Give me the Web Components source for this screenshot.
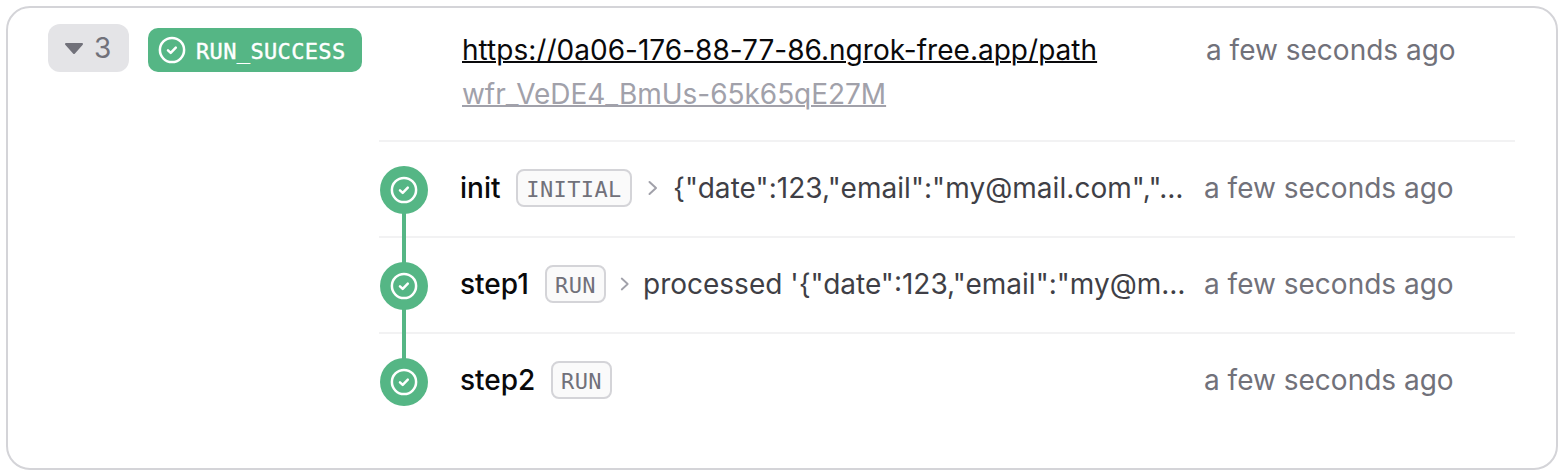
<!DOCTYPE html>
<html lang="en">
<head>
<meta charset="utf-8">
<title>Workflow run</title>
<style>
body{margin:0;padding:6px;background:#fff;font:28px/44px Inter,sans-serif;color:#09090b}
</style>
</head>
<body>
<run-card>
  <run-toggle slot="side">3</run-toggle>
  <run-status slot="side">RUN_SUCCESS</run-status>
  <run-header when="a few seconds ago"><span slot="url">https://0a06-176-88-77-86.ngrok-free.app/path</span><span slot="id">wfr_VeDE4_BmUs-65k65qE27M</span></run-header>
  <run-step name="init" type="INITIAL" when="a few seconds ago" linked style="--nw:40px;--bw:112px;--aw:13px;--gap:14px;--ls:.05px">{"date":123,"email":"my@mail.com","…</run-step>
  <run-step name="step1" type="RUN" when="a few seconds ago" linked style="--nw:69px;--bw:57px;--aw:11px;--gap:12px">processed '{"date":123,"email":"my@m…</run-step>
  <run-step name="step2" type="RUN" when="a few seconds ago" style="--nw:75px;--bw:57px"></run-step>
</run-card>
<script>
const define = (name, html, setup) => {
  const template = document.createElement('template');
  template.innerHTML = html;
  customElements.define(name, class extends HTMLElement {
    constructor() {
      super();
      this.attachShadow({ mode: 'open' }).append(template.content.cloneNode(true));
    }
    connectedCallback() { if (setup) setup(this, this.shadowRoot); }
  });
};

define('check-icon', `<style>:host{display:block;width:28px;height:28px;color:#fff}svg{display:block}</style>
<svg width="28" height="28" viewBox="0 0 28 28" fill="none" stroke="currentColor" stroke-linecap="round" stroke-linejoin="round"><circle cx="14" cy="14" r="12.1" stroke-width="2.5"/><path d="M10 14.4l2.7 2.5 5.1-5.2" stroke-width="2.5"/></svg>`);

define('run-toggle', `<style>
:host{display:flex;align-items:center;box-sizing:border-box;width:81px;height:48px;padding-left:16px;gap:10px;border-radius:12px;background:#e4e4e7;color:#71717a;flex:none}
svg{display:block;margin-top:2px}
</style><svg width="20" height="12" viewBox="0 0 20 12"><path d="M2 1h16L10 10z" fill="#71717a" stroke="#71717a" stroke-width="2" stroke-linejoin="round"/></svg><span><slot></slot></span>`);

define('run-status', `<style>
:host{display:flex;align-items:center;box-sizing:border-box;width:214px;height:44px;margin-top:4px;padding-left:10px;gap:10px;border-radius:10px;background:#55b685;color:#fff;flex:none}
span{padding-top:3px;font:22px/41px "DejaVu Sans Mono",monospace;letter-spacing:.35px;-webkit-text-stroke:.4px #fff}
</style><check-icon></check-icon><span><slot></slot></span>`);

define('run-header', `<style>
:host{display:flex;box-sizing:border-box;height:120px;padding:8px 0 0 83px}
.links{width:744px}
.links div{height:44px;text-decoration:underline;text-decoration-thickness:2px;text-underline-offset:auto}
.url{letter-spacing:.02px}
.id{color:#a1a1aa;letter-spacing:-.04px}
time{color:#71717a}
</style><div class="links"><div class="url"><slot name="url"></slot></div><div class="id"><slot name="id"></slot></div></div><time></time>`,
(el, root) => { root.querySelector('time').textContent = el.getAttribute('when'); });

define('run-step', `<style>
:host{display:flex;align-items:flex-start;box-sizing:border-box;height:96px;border-top:2px solid #f2f2f3;padding-top:24px}
.dot{position:relative;display:grid;place-items:center;width:48px;height:48px;margin-left:1px;border-radius:50%;background:#55b685;flex:none}
:host([linked]) .dot::after{content:"";position:absolute;left:22px;top:47px;width:4px;height:50px;background:#55b685}
.body{display:flex;align-items:center;width:728px;height:44px;margin-left:32px;flex:none}
.name{width:var(--nw);font-weight:500;flex:none;white-space:nowrap}
.type{display:block;box-sizing:border-box;width:calc(var(--bw) + 4px);height:38px;margin-left:16px;border:2px solid #d4d4d8;border-radius:8px;background:#fafafa;color:#71717a;font:22px/38px "DejaVu Sans Mono",monospace;letter-spacing:.4px;text-align:center;flex:none}
.arrow{width:var(--aw);height:20px;margin-left:14px;flex:none}
:host([name="step1"]) .arrow{margin-left:13px;margin-right:1px}
.out{min-width:0;flex:1;margin-left:var(--gap);letter-spacing:var(--ls,0);white-space:nowrap;color:#3f3f46}
time{margin-left:16px;color:#71717a;white-space:nowrap}
</style><div class="dot"><check-icon></check-icon></div><div class="body"><span class="name"></span><span class="type"></span><svg class="arrow" viewBox="0 0 12 20" fill="none"><path d="M3 4l6.5 6L3 16" stroke="#a1a1aa" stroke-width="2" stroke-linecap="round" stroke-linejoin="round"/></svg><span class="out"><slot></slot></span></div><time></time>`,
(el, root) => {
  root.querySelector('.name').textContent = el.getAttribute('name');
  root.querySelector('.type').textContent = el.getAttribute('type');
  root.querySelector('time').textContent = el.getAttribute('when');
  if (!el.textContent) root.querySelector('.arrow').remove();
});

define('run-card', `<style>
:host{display:flex;align-items:flex-start;box-sizing:border-box;width:1552px;height:464px;padding:16px 41px 0 40px;gap:17px;border:2px solid #d4d4d8;border-radius:24px;background:#fff}
.side{display:flex;gap:19px;flex:none}
.main{width:1136px;margin-top:-4px;flex:none}
</style><div class="side"><slot name="side"></slot></div><div class="main"><slot></slot></div>`);
</script>
</body>
</html>
